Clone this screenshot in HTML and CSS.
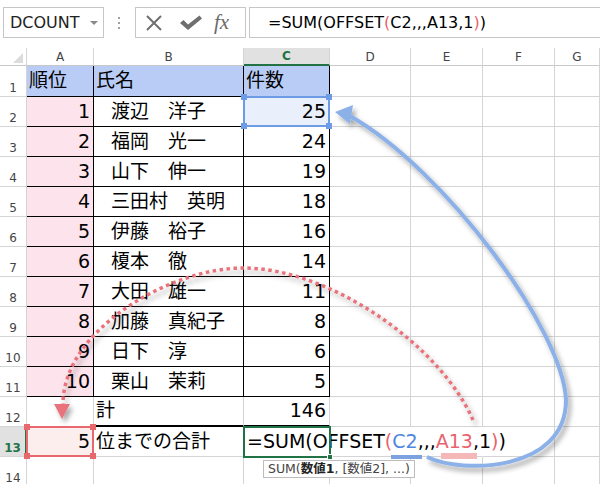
FILE: index.html
```html
<!DOCTYPE html>
<html lang="ja">
<head>
    <meta charset="UTF-8">
    <title>OFFSET</title>
    <link rel="stylesheet" href="styles.css">
</head>
<body>
<div class="screen">
    <div class="fbar">
        <div class="namebox"><span>DCOUNT</span><i class="dd"></i></div>
        <div class="grip"><i></i><i></i><i></i></div>
        <div class="btns">
            <svg class="ic-x" width="18" height="16" viewBox="0 0 18 16"><path d="M2 1 L16 15 M16 1 L2 15" stroke="#6f6f6f" stroke-width="2" fill="none"/></svg>
            <svg class="ic-ok" width="22" height="16" viewBox="0 0 22 16"><path d="M0 8 L3.5 5 L8 9.5 L19.5 0.5 L22 3.5 L8 15 Z" fill="#6f6f6f"/></svg>
            <span class="fxi">fx</span>
        </div>
        <div class="formula">=SUM(OFFSET<span class="fr">(</span>C2,,,A13,1<span class="fr">)</span>)</div>
    </div>

    <div class="sheet">
        <!-- column headers -->
        <div class="corner"></div>
        <div class="ch">A</div><div class="ch">B</div><div class="ch sel">C</div><div class="ch">D</div><div class="ch">E</div><div class="ch">F</div><div class="ch">G</div>

        <div class="rh">1</div>
        <div class="c k hd">順位</div><div class="c k hd">氏名</div><div class="c k hd">件数</div>
        <div class="c"></div><div class="c"></div><div class="c"></div><div class="c"></div>

        <div class="rh">2</div>
        <div class="c k pk num">1</div><div class="c k ind">渡辺　洋子</div>
        <div class="c k num refc">25<span class="ref ref-b"><i class="h tl"></i><i class="h tr"></i><i class="h bl"></i><i class="h br"></i></span></div>
        <div class="c"></div><div class="c"></div><div class="c"></div><div class="c"></div>

        <div class="rh">3</div>
        <div class="c k pk num">2</div><div class="c k ind">福岡　光一</div><div class="c k num">24</div>
        <div class="c"></div><div class="c"></div><div class="c"></div><div class="c"></div>

        <div class="rh">4</div>
        <div class="c k pk num">3</div><div class="c k ind">山下　伸一</div><div class="c k num">19</div>
        <div class="c"></div><div class="c"></div><div class="c"></div><div class="c"></div>

        <div class="rh">5</div>
        <div class="c k pk num">4</div><div class="c k ind">三田村　英明</div><div class="c k num">18</div>
        <div class="c"></div><div class="c"></div><div class="c"></div><div class="c"></div>

        <div class="rh">6</div>
        <div class="c k pk num">5</div><div class="c k ind">伊藤　裕子</div><div class="c k num">16</div>
        <div class="c"></div><div class="c"></div><div class="c"></div><div class="c"></div>

        <div class="rh">7</div>
        <div class="c k pk num">6</div><div class="c k ind">榎本　徹</div><div class="c k num">14</div>
        <div class="c"></div><div class="c"></div><div class="c"></div><div class="c"></div>

        <div class="rh">8</div>
        <div class="c k pk num">7</div><div class="c k ind">大田　雄一</div><div class="c k num">11</div>
        <div class="c"></div><div class="c"></div><div class="c"></div><div class="c"></div>

        <div class="rh">9</div>
        <div class="c k pk num">8</div><div class="c k ind">加藤　真紀子</div><div class="c k num">8</div>
        <div class="c"></div><div class="c"></div><div class="c"></div><div class="c"></div>

        <div class="rh">10</div>
        <div class="c k pk num">9</div><div class="c k ind">日下　淳</div><div class="c k num">6</div>
        <div class="c"></div><div class="c"></div><div class="c"></div><div class="c"></div>

        <div class="rh">11</div>
        <div class="c k pk num">10</div><div class="c k ind">栗山　茉莉</div><div class="c k num">5</div>
        <div class="c"></div><div class="c"></div><div class="c"></div><div class="c"></div>

        <div class="rh">12</div>
        <div class="c"></div><div class="c b2">計</div><div class="c b2 num">146</div>
        <div class="c"></div><div class="c"></div><div class="c"></div><div class="c"></div>

        <div class="rh sel">13</div>
        <div class="c num refc a13">5<span class="ref ref-r"><i class="h tl"></i><i class="h tr"></i><i class="h bl"></i><i class="h br"></i></span></div>
        <div class="c">位までの合計</div>
        <div class="c active">
            <span class="ftext">=SUM(OFFSET<span class="fr">(</span><span class="fb">C2</span>,,,<span class="fr">A13</span>,1<span class="fr">)</span>)</span>
            <span class="act"><i class="fill"></i></span>
            <span class="tip">SUM(<b>数値1</b>, [数値2], ...)</span>
        </div>
        <div class="c nr"></div><div class="c nr"></div><div class="c"></div><div class="c"></div>

        <div class="rh">14</div>
        <div class="c"></div><div class="c"></div><div class="c"></div>
        <div class="c"></div><div class="c"></div><div class="c"></div><div class="c"></div>
    </div>

    <!-- annotation arrows -->
    <svg class="arrows" width="600" height="484" viewBox="0 0 600 484">
        <defs>
            <filter id="sh" x="-20%" y="-20%" width="140%" height="140%">
                <feDropShadow dx="3" dy="4" stdDeviation="2.5" flood-color="#000" flood-opacity="0.35"/>
            </filter>
        </defs>
        <g filter="url(#sh)">
            <path d="M427 457 C462 474 566 472 566 400 C563 330 445 170 350 116" stroke="#8cb1e8" stroke-width="4" fill="none"/>
            <polygon points="335,112 353,105 350,124" fill="#8cb1e8"/>
        </g>
        <g filter="url(#sh)">
            <path d="M473 420 C440 345 330 268 243 268 C170 268 63 330 63 404" stroke="#e9737b" stroke-width="3.5" stroke-dasharray="3.5 3.5" fill="none"/>
            <polygon points="62,419 54,404 70,404" fill="#e9737b"/>
        </g>
        <rect x="391" y="455" width="31" height="4" fill="#7ca3df"/>
        <rect x="441" y="453" width="36" height="6" fill="#f5b8b8"/>
    </svg>
</div>
</body>
</html>
```

FILE: styles.css
```css
* {
    margin: 0;
    padding: 0;
    box-sizing: border-box;
}

body {
    background-color: #fff;
    font-family: "DejaVu Sans", "Noto Sans CJK JP", sans-serif;
    color: #000;
}

.screen {
    position: relative;
    width: 600px;
    height: 484px;
    overflow: hidden;
}

/* formula bar */
.fbar {
    display: flex;
    align-items: center;
    height: 38px;
    padding: 7px 0 0 3px;
}

.namebox {
    width: 101px;
    height: 31px;
    border: 1px solid #c6c6c6;
    display: flex;
    align-items: center;
    padding-left: 6px;
    font-size: 16px;
    color: #222;
}

.dd {
    margin-left: auto;
    margin-right: 5px;
    width: 0;
    height: 0;
    border-left: 4px solid transparent;
    border-right: 4px solid transparent;
    border-top: 4px solid #8a8a8a;
}

.grip {
    width: 3px;
    margin-left: 14px;
    display: flex;
    flex-direction: column;
    gap: 3px;
}

.grip i {
    display: block;
    width: 2px;
    height: 2px;
    background-color: #a0a0a0;
}

.btns {
    width: 111px;
    height: 31px;
    margin-left: 14px;
    border: 1px solid #c6c6c6;
    display: flex;
    align-items: center;
    padding-left: 9px;
}

.ic-ok {
    margin-left: 17px;
}

.fxi {
    margin-left: 12px;
    font-family: "Liberation Serif", serif;
    font-style: italic;
    font-size: 21px;
    color: #6a6a6a;
}

.formula {
    flex: 1;
    height: 31px;
    margin-left: 3px;
    border: 1px solid #c6c6c6;
    border-right: none;
    display: flex;
    align-items: center;
    padding-left: 18px;
    font-size: 16px;
    white-space: nowrap;
}

.fr {
    color: #e8636d;
}

.fb {
    color: #4f87e0;
}

/* sheet grid */
.sheet {
    margin-top: 10px;
    display: grid;
    grid-template-columns: 27px 67px 150px 86px 81px 72px 72px 1fr;
    grid-template-rows: 18px 31px repeat(13, 30px);
}

.corner,
.ch,
.rh {
    border-right: 1px solid #d4d4d4;
    border-bottom: 1px solid #c8c8c8;
    font-size: 12px;
    line-height: 13px;
    color: #444;
    display: flex;
    justify-content: center;
    align-items: flex-end;
}

.corner {
    position: relative;
}

.corner::after {
    content: "";
    position: absolute;
    right: 3px;
    bottom: 2px;
    border-left: 10px solid transparent;
    border-bottom: 10px solid #dcdcdc;
}

.ch {
    padding-bottom: 1px;
}

.rh {
    border-bottom-color: #d4d4d4;
    padding-bottom: 1px;
}

.ch.sel {
    background-color: #e1e1e1;
    color: #217346;
    font-weight: bold;
    border-bottom: 2px solid #217346;
}

.rh.sel {
    background-color: #e1e1e1;
    color: #217346;
    font-weight: bold;
    border-right: 2px solid #217346;
}

.c {
    border-right: 1px solid #d4d4d4;
    border-bottom: 1px solid #d4d4d4;
    font-size: 19px;
    line-height: 22px;
    display: flex;
    align-items: center;
    padding: 0 3px 2px 2px;
    white-space: nowrap;
}

.c.k {
    border-right-color: #000;
    border-bottom-color: #000;
}

.c.b2 {
    border-bottom: 2px solid #000;
}

.c.nr {
    border-right-color: transparent;
}

.hd {
    background-color: #b8ccf5;
}

.pk {
    background-color: #fde3ec;
}

.num {
    justify-content: flex-end;
}

.ind {
    padding-left: 17px;
}

/* reference highlights */
.refc {
    position: relative;
    background-color: #e9effb;
}

.a13 {
    background-color: #fdeeee;
}

.ref {
    position: absolute;
    left: -1px;
    top: -1px;
    right: -1px;
    bottom: -1px;
    border: 2px solid #6e9be6;
    z-index: 2;
}

.ref-r {
    border-color: #e8696d;
}

.h {
    position: absolute;
    width: 6px;
    height: 6px;
    background-color: #6e9be6;
}

.ref-r .h {
    background-color: #e8696d;
}

.tl { left: -4px; top: -4px; }
.tr { right: -4px; top: -4px; }
.bl { left: -4px; bottom: -4px; }
.br { right: -4px; bottom: -4px; }

/* active cell */
.active {
    position: relative;
    padding-left: 3px;
}

.act {
    position: absolute;
    left: -1px;
    top: -1px;
    right: -2px;
    bottom: -2px;
    border: 2px solid #217346;
    z-index: 2;
}

.fill {
    position: absolute;
    right: -4px;
    bottom: -4px;
    width: 6px;
    height: 6px;
    background-color: #217346;
    border: 1px solid #fff;
}

.tip {
    position: absolute;
    left: 19px;
    top: 33px;
    height: 18px;
    padding: 0 4px;
    background-color: #fff;
    border: 1px solid #bdbdbd;
    font-size: 12.5px;
    line-height: 16px;
    color: #444;
    z-index: 3;
}

.tip b {
    color: #222;
}

.arrows {
    position: absolute;
    top: 0;
    left: 0;
    z-index: 5;
    pointer-events: none;
}
```
